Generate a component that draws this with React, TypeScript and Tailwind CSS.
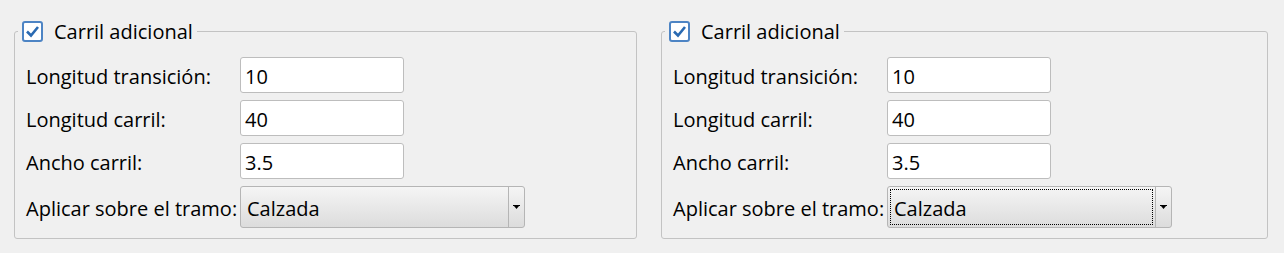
import React from "react";

const font = { fontFamily: '"Open Sans", "Noto Sans", sans-serif' };

function Check() {
  return (
    <span className="flex h-[21px] w-[21px] items-center justify-center rounded-[3px] border-2 border-[#4d84c4] bg-white">
      <svg width="17" height="17" viewBox="0 0 17 17">
        <path d="M3 8.5 L7 12.5 L14 4" fill="none" stroke="#2a6ab2" strokeWidth="2.6" />
      </svg>
    </span>
  );
}

function Arrow() {
  return (
    <svg width="7" height="5" viewBox="0 0 7 5">
      <rect x="0" y="0" width="7" height="1" fill="#000" />
      <polygon points="1,1 6,1 3.5,4" fill="#000" />
    </svg>
  );
}

function Field({ label, value }: { label: string; value: string }) {
  return (
    <div className="flex items-center h-[36px]">
      <span className="w-[214px] shrink-0 pt-[3px] text-[20px] text-black leading-none">{label}</span>
      <div className="w-[164px] h-[36px] rounded-[3px] border border-[#bdbdbd] bg-white flex items-center pl-[4px] pt-[3px] text-[20px] text-black leading-none">
        {value}
      </div>
    </div>
  );
}

function Panel({ width, focused }: { width: string; focused: boolean }) {
  return (
    <fieldset
      className={`${width} h-[219px] rounded-[3px] border border-[#c3c3c3] px-[11px] pt-[15px] pb-[10px]`}
      style={font}
    >
      <legend className="-ml-[8px] pl-[4px] pr-[4px] h-[22px]">
        <div className="flex items-center gap-[11px] h-[22px]">
          <Check />
          <span className="pt-[2px] text-[20px] leading-none text-black">Carril adicional</span>
        </div>
      </legend>
      <div className="flex flex-col gap-[7px]">
        <Field label="Longitud transición:" value="10" />
        <Field label="Longitud carril:" value="40" />
        <Field label="Ancho carril:" value="3.5" />
        <div className="flex items-center h-[42px]">
          <span className="w-[214px] shrink-0 pt-[3px] text-[20px] text-black leading-none">Aplicar sobre el tramo:</span>
          <div className="w-[285px] h-[42px] rounded-[3px] border border-[#b5b5b5] bg-gradient-to-b from-[#f5f5f5] to-[#dcdcdc] flex">
            <div className="flex-1 p-[2px]">
              <div
                className={`h-full flex items-center pl-[3px] pt-[3px] text-[20px] text-black leading-none ${
                  focused ? "border border-dotted border-black" : "border border-transparent"
                }`}
              >
                Calzada
              </div>
            </div>
            <div className="w-[16px] border-l border-[#b5b5b5] flex items-center justify-center">
              <Arrow />
            </div>
          </div>
        </div>
      </div>
    </fieldset>
  );
}

export default function App() {
  return (
    <div className="w-[1284px] h-[253px] bg-[#f0f0f0] flex items-start pl-[14px] pt-[20px] gap-[24px]">
      <Panel width="w-[623px]" focused={false} />
      <Panel width="w-[607px]" focused={true} />
    </div>
  );
}
